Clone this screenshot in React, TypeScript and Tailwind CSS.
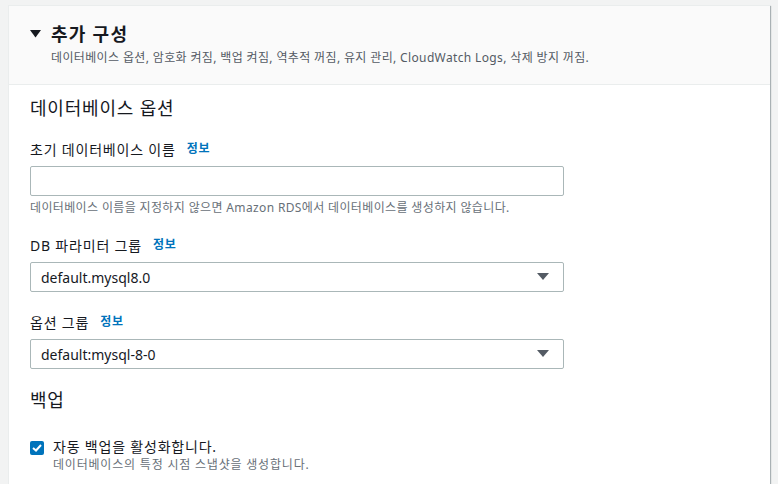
import React from 'react';

const font = { fontFamily: '"Noto Sans", "Noto Sans CJK KR", sans-serif' };

const InfoLink = () => (
    <span className="ml-[11px] text-[12px] font-bold text-[#0073bb]">정보</span>
);

const FieldLabel: React.FC<{ children: React.ReactNode }> = ({ children }) => (
    <div className="flex items-center h-[20px] text-[14px] text-[#16191f]">
        <span>{children}</span>
        <InfoLink />
    </div>
);

const SelectBox: React.FC<{ value: string }> = ({ value }) => (
    <div className="mt-[7px] w-[534px] h-[30px] border border-[#aab7b8] rounded-[2px] bg-white flex items-center justify-between pl-[10px] pr-[14px]">
        <span className="text-[14px] tracking-normal text-[#16191f]">{value}</span>
        <svg width="12" height="8" viewBox="0 0 12 8">
            <path d="M0 0 H12 L6 7 Z" fill="#545b64" />
        </svg>
    </div>
);

export default function App() {
    return (
        <div className="w-[778px] h-[484px] bg-[#f2f3f3] overflow-hidden pt-[5px] pl-[8px] tracking-[0.05em]" style={font}>
            <div className="w-[762px] h-[490px] bg-white border-l border-t border-[#eaeded] shadow-[1px_1px_1px_0_rgba(0,28,36,0.3)]">
                {/* Header */}
                <div className="bg-[#fafafa] border-b border-[#eaeded] pt-[16px] pb-[18px] pl-[21px]">
                    <div className="flex items-center h-[24px]">
                        <svg width="11" height="8" viewBox="0 0 11 8" className="mr-[10px]">
                            <path d="M0 0 H11 L5.5 7.5 Z" fill="#16191f" />
                        </svg>
                        <span className="text-[18px] font-bold text-[#16191f] tracking-[0.07em]">추가 구성</span>
                    </div>
                    <div className="mt-[4px] pl-[21px] h-[16px] text-[12px] leading-[16px] text-[#545b64] tracking-[0.03em]">
                        데이터베이스 옵션, 암호화 켜짐, 백업 켜짐, 역추적 꺼짐, 유지 관리, CloudWatch Logs, 삭제 방지 꺼짐.
                    </div>
                </div>

                {/* Body */}
                <div className="pl-[21px] pt-[11px]">
                    <div className="h-[24px] text-[18px] leading-[24px] text-[#16191f]">데이터베이스 옵션</div>

                    <div className="mt-[19px]">
                        <FieldLabel>초기 데이터베이스 이름</FieldLabel>
                        <div className="mt-[7px] w-[534px] h-[30px] border border-[#aab7b8] rounded-[2px] bg-white" />
                        <div className="mt-[4px] h-[16px] text-[12px] leading-[16px] text-[#687078] tracking-[0.03em]">
                            데이터베이스 이름을 지정하지 않으면 Amazon RDS에서 데이터베이스를 생성하지 않습니다.
                        </div>
                    </div>

                    <div className="mt-[19px]">
                        <FieldLabel>DB 파라미터 그룹</FieldLabel>
                        <SelectBox value="default.mysql8.0" />
                    </div>

                    <div className="mt-[20px]">
                        <FieldLabel>옵션 그룹</FieldLabel>
                        <SelectBox value="default:mysql-8-0" />
                    </div>

                    <div className="mt-[19px] h-[24px] text-[18px] leading-[24px] text-[#16191f]">백업</div>

                    <div className="mt-[25px] flex">
                        <div className="mt-[4px] w-[14px] h-[14px] rounded-[2px] bg-[#0073bb] flex items-center justify-center">
                            <svg width="10" height="8" viewBox="0 0 10 8">
                                <path d="M1 4 L4 6.5 L9 1" stroke="white" strokeWidth="2" fill="none" />
                            </svg>
                        </div>
                        <div className="ml-[9px]">
                            <div className="h-[20px] text-[14px] leading-[20px] text-[#16191f]">자동 백업을 활성화합니다.</div>
                            <div className="h-[16px] text-[12px] leading-[16px] text-[#687078]">데이터베이스의 특정 시점 스냅샷을 생성합니다.</div>
                        </div>
                    </div>
                </div>
            </div>
        </div>
    );
}
